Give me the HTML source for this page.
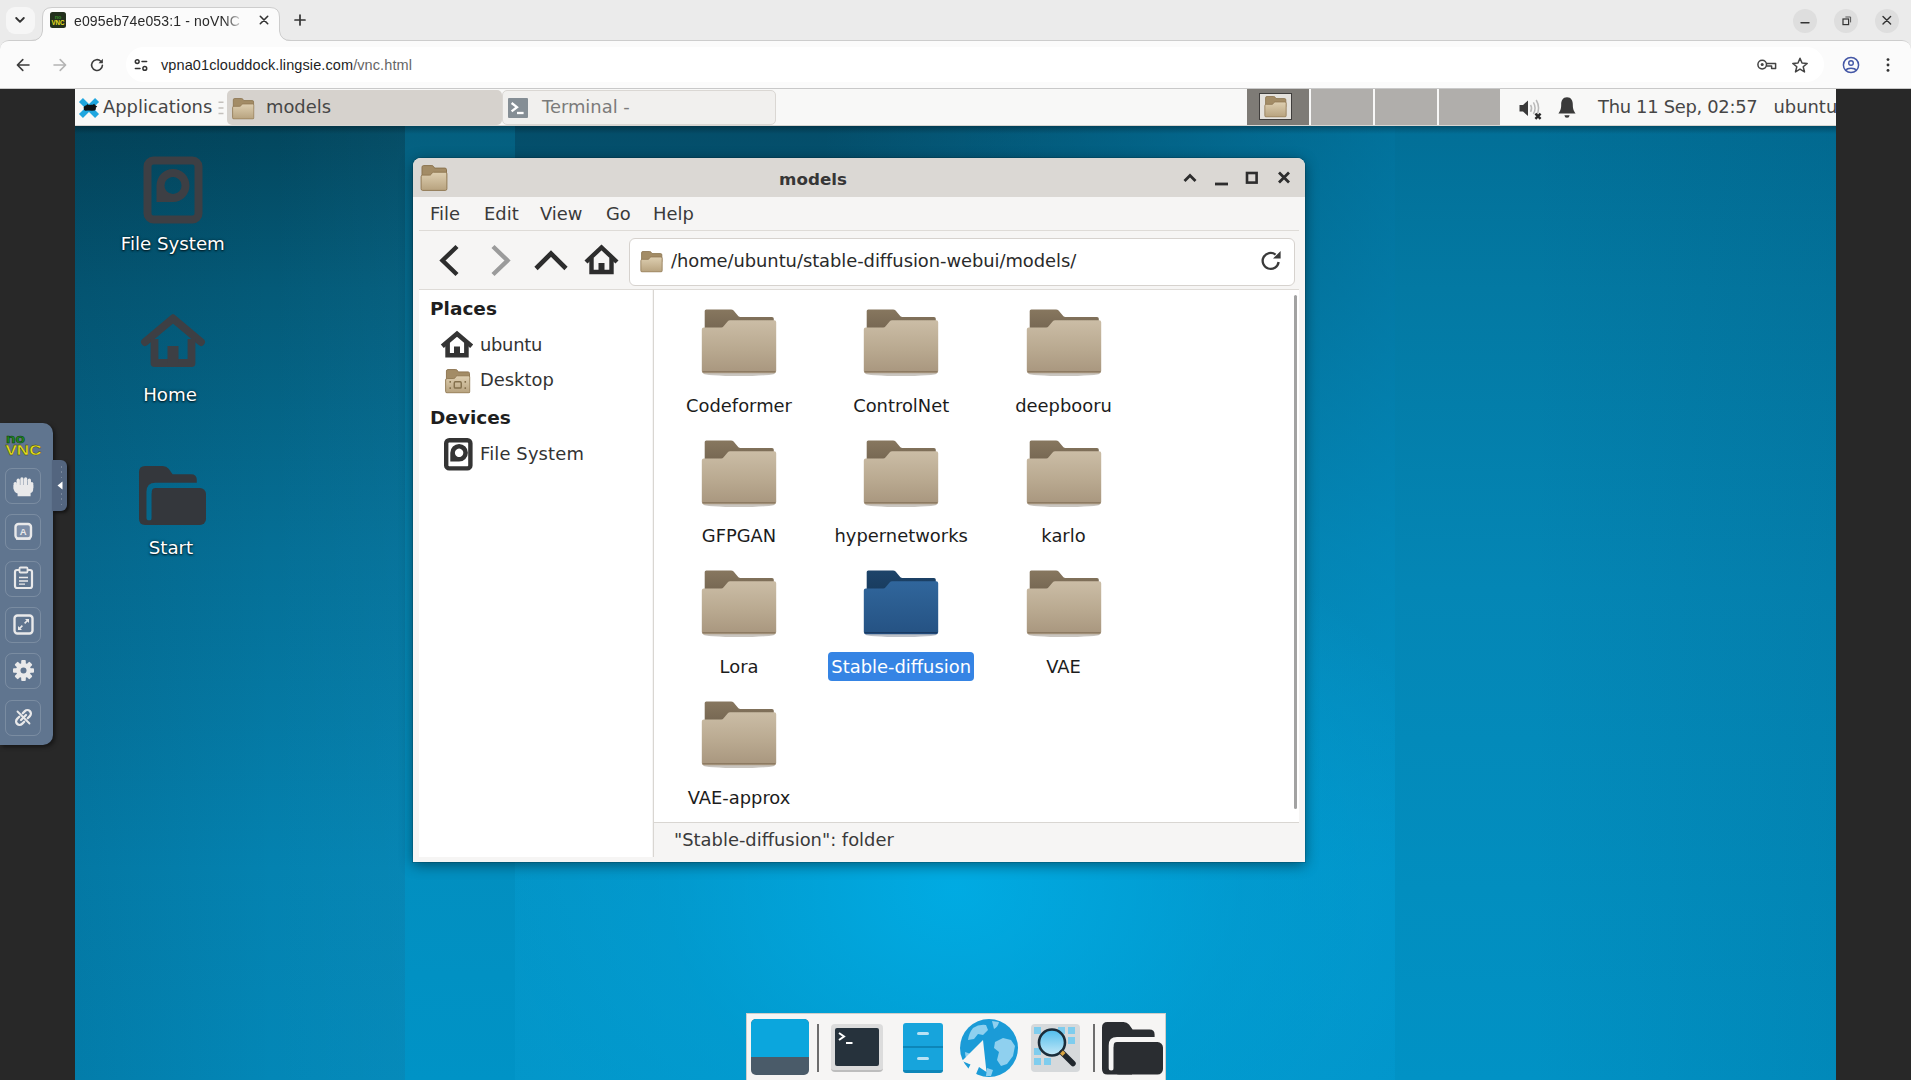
<!DOCTYPE html>
<html lang="en">
<head>
<meta charset="utf-8">
<title>e095eb74e053:1 - noVNC</title>
<style>
*{box-sizing:border-box;margin:0;padding:0}
html,body{width:1911px;height:1080px;overflow:hidden;background:#282828}
body{position:relative;font-family:"Liberation Sans",sans-serif;color:#1f1f1f}
.abs{position:absolute}
svg{display:block;overflow:visible}
/* ---------- Chrome browser frame ---------- */
#tsbg{left:0;top:0;width:1911px;height:60px;background:#ebebeb}
#tabstrip{left:0;top:0;width:1911px;height:41px;z-index:3}
#tsline{left:0;top:40px;width:1911px;height:1px;background:#d2d2d2}
#tabsearch{left:6px;top:7px;width:29px;height:27px;border-radius:9px;background:#f6f6f6}
#tabtitle{left:74px;top:11px;width:172px;height:20px;font-size:14px;line-height:20px;color:#2a2a2a;white-space:nowrap;overflow:hidden;letter-spacing:.15px;
 -webkit-mask-image:linear-gradient(90deg,#000 150px,transparent 171px);mask-image:linear-gradient(90deg,#000 150px,transparent 171px)}
#toolbar{left:0;top:40px;width:1911px;height:49px;background:#fbfbfb;border-top:1px solid #cdcdcd;border-bottom:1px solid #c9c9c9;border-radius:9px 9px 0 0;z-index:2}
#omni{left:126px;top:6px;width:1698px;height:35px;border-radius:18px;background:#fff}
#url{left:161px;top:14px;font-size:14.5px;line-height:20px;color:#1f1f1f;white-space:nowrap;letter-spacing:.1px}
#url span{color:#666}
.wc{top:8.500px;width:24px;height:24px;border-radius:50%;background:#dedede}
/* ---------- noVNC ---------- */
#canvas{left:75px;top:89px;width:1761px;height:991px;overflow:hidden;font-family:"DejaVu Sans","Liberation Sans",sans-serif;
 background:#0a7aa8}
#vncbar{left:0;top:423px;width:52.500px;height:322px;background:#60758f;border-radius:0 10px 10px 0;box-shadow:2px 2px 4px rgba(0,0,0,.5)}
#vnchandle{left:52px;top:459.500px;width:15px;height:51px;background:#53657f;border-radius:0 6px 6px 0;box-shadow:2px 2px 3px rgba(0,0,0,.5)}
.vb{left:5px;width:36px;height:35.700px;border:1px solid rgba(255,255,255,.17);border-radius:7px}

/* ---------- Xfce ---------- */
#wall{left:0;top:0;width:1761px;height:991px;background:#0a7aa8}
#wl{left:0;width:330px;background:linear-gradient(90deg,rgba(0,20,40,.09),rgba(0,0,0,0) 60%,rgba(60,200,255,.05)),linear-gradient(180deg,#03465d 37px,#045a78 200px,#056f96 460px,#0482b0 780px,#0387b7 991px)}
#wb{left:330px;width:110px;background:linear-gradient(180deg,#045f7f 37px,#056c90 200px,#0681ac 460px,#028fc0 780px,#0093c6 991px)}
#wm{left:440px;width:880px;background:radial-gradient(ellipse 520px 420px at 440px 800px,rgba(0,172,228,.95),rgba(0,160,214,.5) 55%,rgba(0,150,200,0) 100%),linear-gradient(90deg,rgba(0,0,0,0) 35%,rgba(0,150,205,.5) 100%),linear-gradient(180deg,#044d69 37px,#055c7d 200px,#0678a2 460px,#0492c4 780px,#0396c9 991px)}
#wr{left:1320px;width:441px;background:linear-gradient(90deg,rgba(0,0,0,0) 30%,rgba(0,30,50,.08) 100%),linear-gradient(180deg,#026f97 37px,#0379a3 200px,#0486b5 500px,#028ebf 800px,#0192c5 991px)}
.band{top:0;height:991px}
#panel{left:0;top:0;width:1761px;height:37px;background:#f8f8f7;border-bottom:1px solid #d9d6d2;font-size:17.9px;line-height:36px;color:#464646;white-space:nowrap}
#pshadow{left:0;top:37px;width:1761px;height:8px;background:linear-gradient(rgba(0,0,0,.28),rgba(0,0,0,0))}
.dlabel{width:200px;text-align:center;font-size:18.2px;line-height:24px;color:#fff;text-shadow:0 1px 2px rgba(0,0,0,.8),0 0 3px rgba(0,0,0,.5)}
#win{left:338px;top:69px;width:892px;height:704px;background:#f6f5f4;border-radius:8px 8px 0 0;box-shadow:0 3px 14px rgba(0,0,0,.45),0 0 0 1px rgba(0,0,0,.12);font-size:17.9px;color:#2e2e2e}
#title{left:0;top:0;width:892px;height:39px;background:#dbd8d4;border-radius:8px 8px 0 0;text-align:center;font-weight:bold;font-size:16.7px;line-height:42px;color:#363636}
#menubar{left:0;top:39px;width:892px;height:34px;line-height:34px;color:#3a3a3a}
#menubar span{position:absolute;top:0}
#pathbar{left:216px;top:79.500px;width:666px;height:48px;background:#fff;border:1px solid #d6d2ce;border-radius:6px}
#side{left:6px;top:132px;width:233px;height:567px;background:#fff}
#main{left:241px;top:132px;width:645px;height:532px;background:#fff}
#status{left:241px;top:665px;width:645px;height:34px;line-height:33px;padding-left:20px;color:#3a3a3a}
.sh{font-weight:bold;left:17px;color:#1e1e1e;line-height:24px;font-size:18.5px}
.si{left:60px;line-height:24px;color:#333}
.flabel{margin-top:-.8px;width:200px;text-align:center;line-height:24px;color:#1c1c1c;white-space:nowrap}
#dock{left:671px;top:924px;width:420px;height:67px;background:#f6f5f4;border:1px solid #d0cdc9;border-bottom:0}
</style>
</head>
<body>
<svg width="0" height="0" style="position:absolute">
<defs>
 <linearGradient id="gfb" x1="0" y1="0" x2="0" y2="1"><stop offset="0" stop-color="#87775f"/><stop offset="1" stop-color="#736450"/></linearGradient>
 <linearGradient id="gff" x1="0" y1="0" x2="0" y2="1"><stop offset="0" stop-color="#cbbda6"/><stop offset=".55" stop-color="#b9a990"/><stop offset="1" stop-color="#a8967e"/></linearGradient>
 <linearGradient id="gsb" x1="0" y1="0" x2="0" y2="1"><stop offset="0" stop-color="#1d446a"/><stop offset="1" stop-color="#183a5c"/></linearGradient>
 <linearGradient id="gsf" x1="0" y1="0" x2="0" y2="1"><stop offset="0" stop-color="#30669c"/><stop offset=".55" stop-color="#2a5b8e"/><stop offset="1" stop-color="#255283"/></linearGradient>
 <symbol id="folder" viewBox="0 0 76 68">
  <ellipse cx="38" cy="64.5" rx="36" ry="2.6" fill="rgba(60,45,25,.28)"/>
  <path d="M3.7 2 Q3.7 0.4 5.3 0.4 H30 Q31.6 0.4 32.6 1.6 L37.4 7.2 Q38.2 8 39.6 8 H71 Q72.8 8 72.8 9.8 V24 H3.7 Z" fill="url(#gfb)"/>
  <path d="M0.8 20.4 Q0.8 18.4 2.8 18.4 H20.2 Q21.6 18.4 22.6 17.2 L26.6 12.4 Q27.6 11.2 29.2 11.2 H73.2 Q75.2 11.2 75.2 13.2 V62 Q75.2 64.2 73 64.2 H3 Q0.8 64.2 0.8 62 Z" fill="url(#gff)"/>
  <path d="M1.6 62.6 H74.4" stroke="rgba(90,70,45,.35)" stroke-width="1.4"/>
 </symbol>
 <symbol id="folderSel" viewBox="0 0 76 68">
  <ellipse cx="38" cy="64.5" rx="36" ry="2.6" fill="rgba(20,35,60,.28)"/>
  <path d="M3.7 2 Q3.7 0.4 5.3 0.4 H30 Q31.6 0.4 32.6 1.6 L37.4 7.2 Q38.2 8 39.6 8 H71 Q72.8 8 72.8 9.8 V24 H3.7 Z" fill="url(#gsb)"/>
  <path d="M0.8 20.4 Q0.8 18.4 2.8 18.4 H20.2 Q21.6 18.4 22.6 17.2 L26.6 12.4 Q27.6 11.2 29.2 11.2 H73.2 Q75.2 11.2 75.2 13.2 V62 Q75.2 64.2 73 64.2 H3 Q0.8 64.2 0.8 62 Z" fill="url(#gsf)"/>
  <path d="M1.6 62.6 H74.4" stroke="rgba(10,25,50,.4)" stroke-width="1.4"/>
 </symbol>
 <linearGradient id="gsm" x1="0" y1="0" x2="0" y2="1"><stop offset="0" stop-color="#decfb1"/><stop offset="1" stop-color="#b7a27e"/></linearGradient>
 <symbol id="sfolder" viewBox="0 0 27 26">
  <path d="M1.5 2.200 Q1.5 0.600 3.100 0.600 H11.400 Q12.400 0.600 13 1.400 L14.100 3.100 H24.400 Q26 3.100 26 4.700 V13 H1.5 Z" fill="#a38c66" stroke="#8c7450" stroke-width="1"/>
  <path d="M0.600 11.700 Q0.600 10.100 2.200 10.100 H9.300 Q10 10.100 10.500 9.500 L11.700 7.800 Q12.200 7.200 13 7.200 H24.800 Q26.400 7.200 26.400 8.800 V23.800 Q26.400 25.400 24.800 25.400 H2.200 Q0.600 25.400 0.600 23.800 Z" fill="url(#gsm)" stroke="#927a55" stroke-width="1"/>
 </symbol>
</defs></svg>
<!-- Chrome -->
<div id="tsbg" class="abs"></div>
<div id="tabstrip" class="abs">
  <div id="tabsearch" class="abs"></div>
  <svg id="tab" class="abs" style="left:0;top:0" width="320" height="42" viewBox="0 0 320 42"><path d="M31 41 Q41.500 41 42.500 31 V17 Q42.500 7.500 52 7.500 H270 Q279.500 7.500 279.500 17 V31 Q280.500 41 291 41 V42 H31 Z" fill="#fbfbfb"/><path d="M31 40.500 Q41.500 40.500 42.500 31 V17 Q42.500 7.500 52 7.500 H270 Q279.500 7.500 279.500 17 V31 Q280.500 40.500 291 40.500" fill="none" stroke="#cdcdcd" stroke-width="1"/></svg>
  <div id="tabtitle" class="abs">e095eb74e053:1 - noVNC</div>

  <!-- tab search chevron -->
  <svg class="abs" style="left:14px;top:15px" width="12" height="10" viewBox="0 0 12 10"><path d="M2.2 3 L6 6.8 L9.8 3" fill="none" stroke="#333" stroke-width="1.9" stroke-linecap="round" stroke-linejoin="round"/></svg>
  <!-- favicon -->
  <svg class="abs" style="left:50px;top:12px" width="16" height="16" viewBox="0 0 16 16"><rect width="16" height="16" rx="2.5" fill="#23301c"/><text x="8" y="7" font-family="Liberation Sans,sans-serif" font-weight="bold" font-size="5.5" fill="#3c8c2a" text-anchor="middle">no</text><text x="8" y="13" font-family="Liberation Sans,sans-serif" font-weight="bold" font-size="6.6" fill="#e8e020" text-anchor="middle" textLength="13" lengthAdjust="spacingAndGlyphs">VNC</text></svg>
  <!-- tab close -->
  <svg class="abs" style="left:259px;top:15px" width="10" height="10" viewBox="0 0 10 10"><path d="M1.3 1.3 L8.7 8.7 M8.7 1.3 L1.3 8.7" stroke="#333" stroke-width="1.6" stroke-linecap="round"/></svg>
  <!-- new tab -->
  <svg class="abs" style="left:294px;top:14px" width="12" height="12" viewBox="0 0 12 12"><path d="M6 1 V11 M1 6 H11" stroke="#333" stroke-width="1.7" stroke-linecap="round"/></svg>
  <div class="abs wc" style="left:1793px"></div>
  <div class="abs wc" style="left:1834px"></div>
  <div class="abs wc" style="left:1875px"></div>
  <svg class="abs" style="left:1793px;top:8px" width="108" height="24" viewBox="0 0 108 24">
    <path d="M8 14.8 H16" stroke="#333" stroke-width="1.4" stroke-linecap="round"/>
    <rect x="50" y="11" width="5.6" height="5.6" fill="none" stroke="#333" stroke-width="1.2"/>
    <path d="M52.4 9 H57.6 V14.4" fill="none" stroke="#555" stroke-width="1"/>
    <path d="M90 8.4 L97.6 16 M97.6 8.4 L90 16" stroke="#333" stroke-width="1.4" stroke-linecap="round"/>
  </svg>
</div>
<div id="toolbar" class="abs">
  <div id="omni" class="abs"></div>
  <!-- back / fwd / reload -->
  <svg class="abs" style="left:15px;top:16px" width="16" height="16" viewBox="0 0 16 16"><path d="M14 8 H2.6 M7.8 2.6 L2.4 8 L7.8 13.4" fill="none" stroke="#3c3c3c" stroke-width="1.6" stroke-linecap="round" stroke-linejoin="round"/></svg>
  <svg class="abs" style="left:52px;top:16px" width="16" height="16" viewBox="0 0 16 16"><path d="M2 8 H13.4 M8.2 2.6 L13.6 8 L8.2 13.4" fill="none" stroke="#b4b4b4" stroke-width="1.6" stroke-linecap="round" stroke-linejoin="round"/></svg>
  <svg class="abs" style="left:89px;top:16px" width="16" height="16" viewBox="0 0 16 16"><path d="M13.4 8.2 A5.4 5.4 0 1 1 11.8 4.2" fill="none" stroke="#3c3c3c" stroke-width="1.6" stroke-linecap="round"/><path d="M13.9 1.8 V6.2 H9.5 Z" fill="#3c3c3c"/></svg>
  <!-- tune -->
  <svg class="abs" style="left:133px;top:16px" width="16" height="16" viewBox="0 0 16 16"><g fill="none" stroke="#333" stroke-width="1.5" stroke-linecap="round"><circle cx="4.2" cy="4.6" r="1.9"/><path d="M9 4.6 H13.6"/><circle cx="11.8" cy="11.4" r="1.9"/><path d="M2.4 11.4 H7"/></g></svg>
  <!-- key -->
  <svg class="abs" style="left:1757px;top:18px" width="20" height="12" viewBox="0 0 20 12"><circle cx="5.2" cy="5.6" r="4.3" fill="none" stroke="#444" stroke-width="1.5"/><circle cx="5.2" cy="5.6" r="1.5" fill="#444"/><path d="M9.6 4.4 H18.6 V9.6 H14.6 V6.9 H9.6" fill="none" stroke="#444" stroke-width="1.5" stroke-linejoin="round"/></svg>
  <!-- star -->
  <svg class="abs" style="left:1791px;top:15px" width="18" height="18" viewBox="0 0 18 18"><path d="M9 2.2 L11 7 L16.2 7.4 L12.2 10.8 L13.5 15.9 L9 13.1 L4.5 15.9 L5.8 10.8 L1.8 7.4 L7 7 Z" fill="none" stroke="#444" stroke-width="1.5" stroke-linejoin="round"/></svg>
  <!-- profile -->
  <svg class="abs" style="left:1842px;top:15px" width="18" height="18" viewBox="0 0 18 18"><circle cx="9" cy="9" r="7.6" fill="none" stroke="#4457a6" stroke-width="1.5"/><circle cx="9" cy="7" r="2.3" fill="none" stroke="#4457a6" stroke-width="1.4"/><path d="M3.9 14.1 C5.4 11.6 12.6 11.6 14.1 14.1" fill="none" stroke="#4457a6" stroke-width="1.4"/></svg>
  <!-- kebab -->
  <svg class="abs" style="left:1885px;top:16px" width="6" height="16" viewBox="0 0 6 16"><circle cx="3" cy="2.6" r="1.45" fill="#333"/><circle cx="3" cy="8" r="1.45" fill="#333"/><circle cx="3" cy="13.4" r="1.45" fill="#333"/></svg>
  <div id="url" class="abs">vpna01clouddock.lingsie.com<span>/vnc.html</span></div>
</div>

<!-- remote desktop -->
<div id="canvas" class="abs">
  <div id="wall" class="abs"></div>
  <div id="wl" class="abs band"></div><div id="wb" class="abs band"></div><div id="wm" class="abs band"></div><div id="wr" class="abs band"></div>
  <div id="pshadow" class="abs"></div>

  <!-- top panel -->
  <div id="panel" class="abs">
    <svg class="abs" style="left:4px;top:8.800px" width="20" height="20" viewBox="0 0 20 20"><g fill="#1fa6df"><rect x="-1.400" y="7.200" width="22.800" height="5.600" transform="rotate(45 10 10)"/><rect x="-1.400" y="7.200" width="22.800" height="5.600" transform="rotate(-45 10 10)"/></g><path d="M4.600 9.600 Q5 7.600 7.400 7.200 L8.600 5.900 L9.500 7 Q12 6.400 13.800 6.800 L15.200 5.700 L16 6.900 L18.200 8.400 L16.800 9.800 Q17.600 11.600 15.800 12.400 L13 12.800 L9 12.400 L6.400 12.800 Q4.400 12 4.600 9.600 Z" fill="#101418"/></svg>
    <div class="abs" style="left:28px;top:0">Applications</div>
    <svg class="abs" style="left:143px;top:12px" width="6" height="14" viewBox="0 0 6 14"><path d="M0.500 1.200 H5.500 M0.500 6.900 H5.500 M0.500 12.600 H5.500" stroke="#c3c0bc" stroke-width="1.500"/></svg>
    <div class="abs" style="left:152px;top:1px;width:275px;height:35px;background:#d6d2cd;border-radius:5px"></div>
    <svg class="abs" style="left:157px;top:9px" width="22.500" height="21.500"><use href="#sfolder"/></svg>
    <div class="abs" style="left:191px;top:0">models</div>
    <div class="abs" style="left:427px;top:1px;width:274px;height:35px;background:#f1f0ee;border:1px solid #dad7d3;border-radius:5px"></div>
    <svg class="abs" style="left:433px;top:9px" width="20" height="20" viewBox="0 0 20 20"><rect width="20" height="20" rx="1" fill="#858e95"/><path d="M3.6 5 L9 9.2 L3.6 13.4" fill="none" stroke="#fff" stroke-width="2.3"/><path d="M9 15 H15.6" stroke="#fff" stroke-width="2.3"/></svg>
    <div class="abs" style="left:467px;top:0;color:#7b7b7b">Terminal -</div>
    <!-- pager -->
    <div class="abs" style="left:1172px;top:0;width:62px;height:36px;background:#7e7b76"></div>
    <div class="abs" style="left:1236px;top:0;width:62px;height:36px;background:#b0aeab"></div>
    <div class="abs" style="left:1300px;top:0;width:62px;height:36px;background:#b0aeab"></div>
    <div class="abs" style="left:1364px;top:0;width:61px;height:36px;background:#b0aeab"></div>
    <div class="abs" style="left:1184px;top:4px;width:32.500px;height:26.500px;background:#e4e1dc;border:1.800px solid #403e3c"></div>
    <svg class="abs" style="left:1188.500px;top:6.500px" width="23" height="21.500"><use href="#sfolder"/></svg>
    <!-- volume -->
    <svg class="abs" style="left:1443px;top:7px" width="26" height="26" viewBox="0 0 26 26"><path d="M1.5 9 H5 L10 4.5 V20 L5 15.5 H1.5 Z" fill="#3a3a3a"/><path d="M12.6 8.8 Q14.6 12.2 12.6 15.8 M15.4 6.4 Q18.8 12.2 15.4 18 M18.2 4 Q23 12.2 18.2 20.4" fill="none" stroke="#b9b9b9" stroke-width="1.5"/><path d="M17.4 17.6 L22.6 22.8 M22.6 17.6 L17.4 22.8" stroke="#2a2a2a" stroke-width="2.4"/></svg>
    <!-- bell -->
    <svg class="abs" style="left:1482px;top:7px" width="20" height="24" viewBox="0 0 20 24"><path d="M10 1.2 C14.2 1.2 15.8 4.6 15.8 8.4 C15.8 13.4 17 15 18.6 17.4 H1.4 C3 15 4.2 13.4 4.2 8.4 C4.2 4.6 5.8 1.2 10 1.2 Z" fill="#3a3a3a"/><path d="M7.4 19.2 H12.6 Q12.4 21.8 10 21.8 Q7.6 21.8 7.4 19.2 Z" fill="#3a3a3a"/></svg>
    <div class="abs" style="left:1523px;top:0;letter-spacing:-.3px">Thu 11 Sep, 02:57</div>
    <div class="abs" style="left:1698.5px;top:0">ubuntu</div>
  </div>

  <!-- desktop icons -->
  <svg class="abs" style="left:68px;top:67px" width="60" height="68" viewBox="0 0 60 68"><rect x="4.500" y="4.500" width="51" height="59" rx="6" fill="none" stroke="#3d3f44" stroke-width="8"/><path d="M30 13 A16.500 16.500 0 0 1 30 46 H13.500 V29.500 A16.500 16.500 0 0 1 30 13 Z M30 21 A8.500 8.500 0 1 0 30.010 21 Z" fill="#3d3f44" fill-rule="evenodd"/></svg>
  <div class="abs dlabel" style="left:-2.200px;top:143px">File System</div>
  <svg class="abs" style="left:65px;top:224px" width="66" height="55" viewBox="0 0 66 55"><path d="M33 5.500 L61 29 M33 5.500 L5 29" fill="none" stroke="#3d3f44" stroke-width="7.800" stroke-linecap="round"/><path d="M14.500 26 V50 H51.500 V26" fill="none" stroke="#3d3f44" stroke-width="7.800" stroke-linejoin="round"/><rect x="27.500" y="33" width="11" height="17" fill="#3d3f44"/></svg>
  <div class="abs dlabel" style="left:-5px;top:294px">Home</div>
  <svg class="abs" style="left:64px;top:377px" width="67" height="59" viewBox="0 0 61 53.700"><mask id="mk1"><rect width="61" height="54" fill="#fff"/><path d="M9.200 47 V23.500 Q9.200 17.600 15 17.600 H62" fill="none" stroke="#000" stroke-width="4.800" stroke-linecap="round"/></mask><path mask="url(#mk1)" fill="#34373c" d="M0 5.500 Q0 0 5.500 0 H21.500 Q25 0 27 2.600 L30.600 7.400 H47.500 Q52.600 7.400 52.600 12.500 V40 H30 V53.700 H5.500 Q0 53.700 0 48 Z"/><rect x="11.600" y="20" width="49.400" height="33.700" rx="5.500" fill="#34373c"/></svg>
  <div class="abs dlabel" style="left:-4px;top:447px">Start</div>

  <!-- WINDOW -->
  <div id="win" class="abs">
    <div id="title" class="abs"><span style="position:absolute;left:0;width:800px;text-align:center">models</span></div>
    <svg class="abs" style="left:7px;top:7px" width="28" height="26"><use href="#sfolder"/></svg>
    <svg class="abs" style="left:766px;top:11px" width="116" height="18" viewBox="0 0 116 18" fill="none" stroke="#2d2d2d" stroke-width="2.8"><path d="M5.5 12 L11 6.5 L16.5 12"/><path d="M36 15 H49"/><rect x="68" y="4" width="9.6" height="9.6" stroke-width="2.6"/><path d="M100 3.6 L110 13.6 M110 3.6 L100 13.6"/></svg>
    <div id="menubar" class="abs"><span style="left:17px">File</span><span style="left:71px">Edit</span><span style="left:127px">View</span><span style="left:193px">Go</span><span style="left:240px">Help</span></div>
    <div class="abs" style="left:6px;top:72px;width:880px;height:1px;background:#dedbd7"></div>
    <!-- nav buttons -->
    <svg class="abs" style="left:20px;top:84px" width="200" height="36" viewBox="0 0 200 36" fill="none" stroke-linecap="butt" stroke-linejoin="miter"><path d="M24 4.5 L9.5 18.5 L24 32.5" stroke="#2d2d2d" stroke-width="4.4"/><path d="M60 4.5 L74.5 18.5 L60 32.5" stroke="#9b9b9b" stroke-width="4.4"/><path d="M103 26.5 L118 11.5 L133 26.5" stroke="#2d2d2d" stroke-width="4.6"/><path d="M153 20 L168.5 5.5 L184 20" stroke="#2d2d2d" stroke-width="4.4"/><path d="M158.5 16 V30 H178.500 V16" stroke="#2d2d2d" stroke-width="4.4"/><rect x="165.500" y="21" width="6" height="9" fill="#2d2d2d" stroke="none"/></svg>
    <div id="pathbar" class="abs"></div>
    <svg class="abs" style="left:227px;top:92.500px" width="23" height="21.500"><use href="#sfolder"/></svg>
    <div class="abs" style="left:258px;top:91px;line-height:24px;color:#2a2a2a;letter-spacing:-.05px">/home/ubuntu/stable-diffusion-webui/models/</div>
    <svg class="abs" style="left:846px;top:91px" width="24" height="24" viewBox="0 0 24 24"><path d="M19.6 13 A8 8 0 1 1 16.6 5.6" fill="none" stroke="#3a3a3a" stroke-width="2.3"/><path d="M21.6 2 V9.6 H14 Z" fill="#3a3a3a"/></svg>
    <div class="abs" style="left:6px;top:131px;width:880px;height:1px;background:#dedbd7"></div>
    <div id="side" class="abs"></div>
    <div id="main" class="abs"></div>
    <div class="abs" style="left:240px;top:132px;width:1px;height:567px;background:#d9d6d2"></div>
    <div class="abs" style="left:241px;top:664px;width:645px;height:1px;background:#d9d6d2"></div>
    <div id="status" class="abs">"Stable-diffusion": folder</div>
    <div class="abs" style="left:881px;top:137px;width:3px;height:514px;background:#a2a2a2;border-radius:2px"></div>
    <!-- folders -->
    <svg class="abs" style="left:288.0px;top:151.0px" width="76" height="68"><use href="#folder"/></svg>
    <div class="abs flabel" style="left:226.0px;top:236.5px">Codeformer</div>
    <svg class="abs" style="left:450.2px;top:151.0px" width="76" height="68"><use href="#folder"/></svg>
    <div class="abs flabel" style="left:388.2px;top:236.5px">ControlNet</div>
    <svg class="abs" style="left:612.5px;top:151.0px" width="76" height="68"><use href="#folder"/></svg>
    <div class="abs flabel" style="left:550.5px;top:236.5px">deepbooru</div>
    <svg class="abs" style="left:288.0px;top:281.6px" width="76" height="68"><use href="#folder"/></svg>
    <div class="abs flabel" style="left:226.0px;top:367.1px">GFPGAN</div>
    <svg class="abs" style="left:450.2px;top:281.6px" width="76" height="68"><use href="#folder"/></svg>
    <div class="abs flabel" style="left:388.2px;top:367.1px">hypernetworks</div>
    <svg class="abs" style="left:612.5px;top:281.6px" width="76" height="68"><use href="#folder"/></svg>
    <div class="abs flabel" style="left:550.5px;top:367.1px">karlo</div>
    <svg class="abs" style="left:288.0px;top:412.2px" width="76" height="68"><use href="#folder"/></svg>
    <div class="abs flabel" style="left:226.0px;top:497.8px">Lora</div>
    <svg class="abs" style="left:450.2px;top:412.2px" width="76" height="68"><use href="#folderSel"/></svg>
    <div class="abs" style="left:415.2px;top:494.3px;width:146px;height:29px;background:#3584e4;border-radius:4px"></div>
    <div class="abs flabel" style="left:388.2px;top:497.8px;color:#fff">Stable-diffusion</div>
    <svg class="abs" style="left:612.5px;top:412.2px" width="76" height="68"><use href="#folder"/></svg>
    <div class="abs flabel" style="left:550.5px;top:497.8px">VAE</div>
    <svg class="abs" style="left:288.0px;top:542.9px" width="76" height="68"><use href="#folder"/></svg>
    <div class="abs flabel" style="left:226.0px;top:628.4px">VAE-approx</div>
    <!-- sidebar -->
    <div class="abs sh" style="top:139px">Places</div>
    <svg class="abs" style="left:27px;top:172px" width="34" height="28" viewBox="0 0 34 28" fill="none" stroke="#343434"><path d="M2.300 16.300 L17 3.800 L31.700 16.300" stroke-width="4.600"/><path d="M7.600 12.500 V25.300 H26.400 V12.500" stroke-width="4.600"/><rect x="14" y="16.500" width="6" height="9" fill="#343434" stroke="none"/></svg>
    <div class="abs si" style="left:67px;top:174.500px;letter-spacing:-.3px">ubuntu</div>
    <svg class="abs" style="left:31px;top:211.400px" width="27.500" height="24.500" viewBox="0 0 27 26"><use href="#sfolder"/><rect x="9.800" y="13.600" width="7.400" height="6.600" rx="1.200" fill="none" stroke="#84704c" stroke-width="1.500"/><path d="M5.500 12.800 V14.600 M5.500 19.400 V21.200 M21.500 12.800 V14.600 M21.500 19.400 V21.200" stroke="#84704c" stroke-width="1.600"/></svg>
    <div class="abs si" style="left:67px;top:210px">Desktop</div>
    <div class="abs sh" style="top:248px">Devices</div>
    <svg class="abs" style="left:30.500px;top:279.800px" width="28.600" height="32.600" viewBox="0 0 28.600 32.600"><rect x="2.200" y="2.200" width="24.200" height="28.200" rx="3" fill="none" stroke="#343434" stroke-width="4.400"/><path d="M15.100 6 A8.800 8.800 0 0 1 15.100 23.600 H6.300 V14.800 A8.800 8.800 0 0 1 15.100 6 Z M15.100 10.600 A4.200 4.200 0 1 0 15.110 10.600 Z" fill="#343434" fill-rule="evenodd"/></svg>
    <div class="abs si" style="left:67px;top:283.500px;letter-spacing:.15px">File System</div>
  </div>

  <!-- DOCK -->
  <div id="dock" class="abs">
    <div class="abs" style="left:4px;top:5px;width:58px;height:56px;border-radius:5px;overflow:hidden;background:#4a5b69"><div style="height:38px;background:#0ba6dd"></div></div>
    <div class="abs" style="left:70px;top:10px;width:2px;height:48px;background:#6d6d6d"></div>
    <div class="abs" style="left:346px;top:10px;width:2px;height:48px;background:#6d6d6d"></div>
    <!-- terminal -->
    <div class="abs" style="left:84px;top:10px;width:52px;height:48px;border-radius:4px;background:#dcdcdc;border-bottom:2px solid #bdbdbd"></div>
    <div class="abs" style="left:88px;top:14px;width:44px;height:38px;border-radius:2px;background:#26323c"></div>
    <svg class="abs" style="left:90px;top:17px" width="24" height="16" viewBox="0 0 24 16"><path d="M2 2 L7 5.500 L2 9" fill="none" stroke="#fff" stroke-width="2"/><path d="M9 12 H15.5" stroke="#fff" stroke-width="2"/></svg>
    <!-- file cabinet -->
    <div class="abs" style="left:156px;top:9px;width:40px;height:50px;border-radius:3px;background:#17a4dc;border-bottom:3px solid #0d86b8"></div>
    <div class="abs" style="left:156px;top:32px;width:40px;height:2px;background:#0d86b8"></div>
    <div class="abs" style="left:170px;top:18px;width:12px;height:3px;border-radius:2px;background:#b8e2f4"></div>
    <div class="abs" style="left:170px;top:43px;width:12px;height:3px;border-radius:2px;background:#b8e2f4"></div>
    <!-- globe -->
    <svg class="abs" style="left:212px;top:4px" width="60" height="60" viewBox="0 0 60 60"><circle cx="30" cy="30" r="29" fill="#1b9bd7"/><path d="M14 10 Q20 6 27 7 L29 12 L24 17 L19 16 L15 21 L9 22 Q10 15 14 10 Z M33 3 L40 4 Q39 9 35 11 Z M36 24 L44 20 L52 22 L56 28 L54 38 L48 46 L42 48 L38 42 L40 34 L35 30 Z M6 34 L12 36 L14 44 L10 46 Q6 40 6 34 Z M28 50 L34 52 L32 58 L27 58 Z" fill="#8fd0ef"/><path d="M24 22 L3 43 L11.500 46.500 L7 55 L16 58.500 L20 49 L27.500 54 Z" fill="#f6f5f4"/></svg>
    <!-- search -->
    <div class="abs" style="left:284px;top:10px;width:49px;height:48px;border-radius:4px;background:#d6d9db"></div>
    <svg class="abs" style="left:284px;top:10px" width="49" height="48" viewBox="0 0 49 48"><g fill="#7fcdee"><rect x="3" y="3" width="7" height="7"/><rect x="27" y="3" width="7" height="7"/><rect x="37" y="3" width="7" height="7"/><rect x="37" y="13" width="7" height="7"/><rect x="3" y="24" width="7" height="7"/><rect x="3" y="34" width="7" height="7"/><rect x="13" y="34" width="7" height="7"/></g><linearGradient id="glens" x1="0" y1="0" x2="0" y2="1"><stop offset="0" stop-color="#4fbdec"/><stop offset="1" stop-color="#c4e8f7"/></linearGradient><circle cx="21" cy="18.500" r="13" fill="url(#glens)" stroke="#1b2d3a" stroke-width="2.600"/><path d="M31 28.500 L42 39.500" stroke="#20272d" stroke-width="5.500" stroke-linecap="round"/><path d="M30.500 28 L33 30.500" stroke="#d9a441" stroke-width="4"/></svg>
    <!-- folder -->
    <svg class="abs" style="left:355px;top:7.500px" width="61" height="52.500" viewBox="0 0 61 52.500"><mask id="mk2"><rect width="61" height="53" fill="#fff"/><path d="M9.200 46 V23.500 Q9.200 17.600 15 17.600 H62" fill="none" stroke="#000" stroke-width="5" stroke-linecap="round"/></mask><path mask="url(#mk2)" fill="#2a2d31" d="M0 5.500 Q0 0 5.500 0 H21.500 Q25 0 27 2.600 L30.600 7.400 H47.500 Q52.600 7.400 52.600 12.500 V40 H30 V52.500 H5.500 Q0 52.500 0 47 Z"/><rect x="11.700" y="20.100" width="49.300" height="32.400" rx="5.500" fill="#2a2d31"/></svg>
  </div>
</div>

<!-- noVNC control bar -->
<div id="vncbar" class="abs">
  <svg class="abs" style="left:5px;top:10px" width="38" height="24" viewBox="0 0 38 24"><text x="1" y="9.800" font-family="Liberation Sans,sans-serif" font-weight="bold" font-size="12.500" fill="#1f8f1f" stroke="#0c3d0c" stroke-width=".5" textLength="19" lengthAdjust="spacingAndGlyphs">no</text><text x="0.5" y="22" font-family="Liberation Sans,sans-serif" font-weight="bold" font-size="14.5" fill="#e6e01a" stroke="#3a3a10" stroke-width=".4" textLength="36" lengthAdjust="spacingAndGlyphs">VNC</text></svg>
  <div class="abs vb" style="top:45px"></div>
  <div class="abs vb" style="top:91px"></div>
  <div class="abs vb" style="top:138px"></div>
  <div class="abs vb" style="top:184px"></div>
  <div class="abs vb" style="top:230px"></div>
  <div class="abs vb" style="top:277px"></div>
  <!-- hand -->
  <svg class="abs" style="left:12.500px;top:53.500px" width="21" height="20" viewBox="0 0 21 20"><g fill="#e9e9ea"><rect x="3.600" y="1.600" width="3.300" height="9" rx="1.600"/><rect x="7.300" y="0.300" width="3.300" height="10" rx="1.600"/><rect x="11" y="0.300" width="3.300" height="10" rx="1.600"/><rect x="14.700" y="1.600" width="3.300" height="9" rx="1.600"/><rect x="0.600" y="5" width="3.300" height="8" rx="1.600"/><path d="M0.600 8 H20.200 V12 Q20.200 15.500 17.600 16 V19.300 H4.600 V16.600 Q0.600 15 0.600 11 Z"/><rect x="17.300" y="5" width="3" height="7" rx="1.500"/></g></svg>
  <!-- keyboard A -->
  <svg class="abs" style="left:13px;top:98px" width="21" height="21" viewBox="0 0 21 21"><rect x="2.500" y="3" width="15.500" height="14.500" rx="3" fill="#7d8ea8" stroke="#e9e9ea" stroke-width="2.400"/><path d="M3 17.800 H17.500" stroke="#e9e9ea" stroke-width="2"/><text x="10.250" y="14" font-family="Liberation Sans,sans-serif" font-weight="bold" font-size="9.500" fill="#e9e9ea" text-anchor="middle">A</text></svg>
  <!-- clipboard -->
  <svg class="abs" style="left:13px;top:143px" width="21" height="24" viewBox="0 0 21 24"><rect x="2" y="4" width="17" height="18" rx="2" fill="none" stroke="#e9e9ea" stroke-width="2.200"/><rect x="6.500" y="1.500" width="8" height="5" rx="1" fill="#60758f" stroke="#e9e9ea" stroke-width="1.800"/><path d="M6 11.500 H15 M6 15 H15 M6 18.200 H12" stroke="#e9e9ea" stroke-width="1.300"/></svg>
  <!-- fullscreen -->
  <svg class="abs" style="left:13px;top:191px" width="21" height="21" viewBox="0 0 21 21"><rect x="1.500" y="1.500" width="18" height="18" rx="3" fill="none" stroke="#e9e9ea" stroke-width="2.400"/><path d="M12 5 H16 V9 Z M9 16 H5 V12 Z" fill="#e9e9ea"/><path d="M15 6 L11.600 9.400 M6 15 L9.400 11.600" stroke="#e9e9ea" stroke-width="1.600"/></svg>
  <!-- gear -->
  <svg class="abs" style="left:12px;top:236px" width="23" height="23" viewBox="0 0 23 23"><g transform="translate(11.500 11.500)"><g fill="#e9e9ea"><rect x="-2.300" y="-10.500" width="4.600" height="21" rx="1"/><rect x="-2.300" y="-10.500" width="4.600" height="21" rx="1" transform="rotate(45)"/><rect x="-2.300" y="-10.500" width="4.600" height="21" rx="1" transform="rotate(90)"/><rect x="-2.300" y="-10.500" width="4.600" height="21" rx="1" transform="rotate(135)"/><circle r="7.400"/></g><circle r="3" fill="#60758f"/></g></svg>
  <!-- disconnect -->
  <svg class="abs" style="left:12px;top:283px" width="23" height="23" viewBox="0 0 23 23"><g fill="none" stroke="#e9e9ea" stroke-width="2.300" stroke-linecap="round" transform="rotate(-45 11.500 11.500)"><path d="M9 8 H6 A3.500 3.500 0 0 0 6 15 H9"/><path d="M14 8 H17 A3.500 3.500 0 0 1 17 15 H14"/><path d="M8 11.500 H15"/><path d="M11.500 3 V20" stroke-width="1.800"/></g></svg>
</div>
<div id="vnchandle" class="abs">
  <div class="abs" style="left:8.500px;top:6px;width:1.500px;height:40px;background:repeating-linear-gradient(rgba(255,255,255,.22) 0 1.500px,transparent 1.500px 5.400px)"></div>
  <svg class="abs" style="left:5px;top:21px" width="6" height="9" viewBox="0 0 6 9"><path d="M5.500 0.500 V8.500 L0.500 4.500 Z" fill="#fff"/></svg>
</div>
</body>
</html>
